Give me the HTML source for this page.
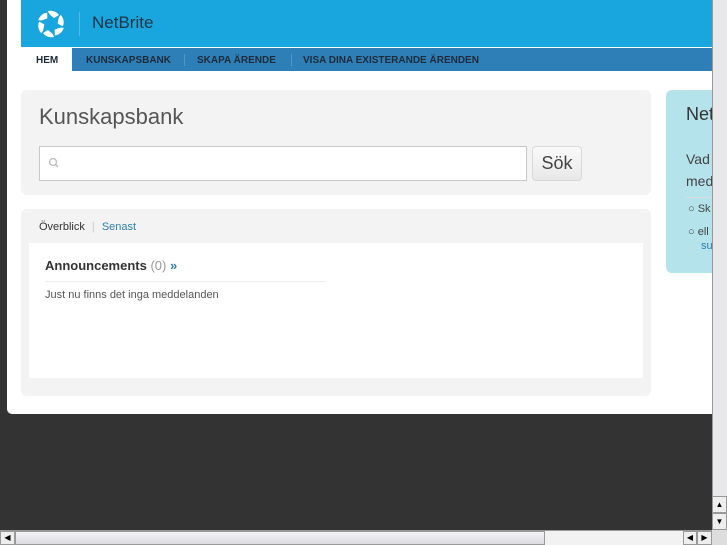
<!DOCTYPE html>
<html><head><meta charset="utf-8"><style>
*{margin:0;padding:0;box-sizing:border-box}
body{width:727px;height:545px;background:#333;position:relative;overflow:hidden;font-family:"Liberation Sans",sans-serif}
.a{position:absolute}
.page{left:7px;top:0;width:705px;height:414px;background:#fff;border-radius:0 0 0 5px}
.hdr{left:21px;top:0;width:691px;height:47px;background:#19a5de}
.nav{left:21px;top:48px;width:691px;height:23px;background:#2e7fb7}
.nav span{position:absolute;top:7px;font-size:10px;font-weight:bold;color:#1d2b3a}
.sep{position:absolute;top:6px;width:1px;height:12px;background:#5594c4}
.card{background:#f3f3f3;border-radius:6px}
</style></head><body>
<div class="a page"></div>
<div class="a hdr">
 <svg class="a" style="left:15px;top:9px" width="30" height="30" viewBox="0 0 30 30">
  <g fill="#fff" transform="translate(15 15)">
   <path id="p" d="M-3,-13 C2,-14 6,-12 8,-9 L3,-6 C1,-8 -2,-9 -3,-13Z"/>
   <use href="#p" transform="rotate(60)"/><use href="#p" transform="rotate(120)"/>
   <use href="#p" transform="rotate(180)"/><use href="#p" transform="rotate(240)"/><use href="#p" transform="rotate(300)"/>
  </g>
 </svg>
 <div class="a" style="left:58px;top:12px;width:1px;height:24px;background:#4dbbe6"></div>
 <div class="a" style="left:71px;top:13px;font-size:17px;color:#1c3545">NetBrite</div>
</div>
<div class="a nav">
 <div class="a" style="left:0;top:0;width:51px;height:23px;background:#fff"></div>
 <span style="left:15px">HEM</span>
 <span style="left:65px">KUNSKAPSBANK</span>
 <div class="sep" style="left:163px"></div>
 <span style="left:176px">SKAPA ÄRENDE</span>
 <div class="sep" style="left:270px"></div>
 <span style="left:282px">VISA DINA EXISTERANDE ÄRENDEN</span>
</div>
<div class="a card" style="left:21px;top:90px;width:630px;height:105px"></div>
<div class="a" style="left:39px;top:104px;font-size:22px;color:#555">Kunskapsbank</div>
<div class="a" style="left:39px;top:146px;width:488px;height:35px;background:#fff;border:1px solid #c8c8c8"></div>
<svg class="a" style="left:48px;top:157px" width="12" height="12"><circle cx="5" cy="5" r="3.5" fill="none" stroke="#bbb" stroke-width="1.3"/><path d="M7.5 7.5L10 10" stroke="#bbb" stroke-width="1.5"/></svg>
<div class="a" style="left:532px;top:146px;width:50px;height:35px;background:linear-gradient(#fafafa,#e8e8e8);border:1px solid #d8d8d8;border-radius:4px;font-size:18px;color:#444;text-align:center;line-height:33px">Sök</div>
<div class="a card" style="left:21px;top:209px;width:630px;height:187px"></div>
<div class="a" style="left:39px;top:221px;font-size:11px;color:#333">Överblick <span style="color:#ccc;margin:0 4px">|</span> <span style="color:#2d7fb0">Senast</span></div>
<div class="a" style="left:29px;top:243px;width:614px;height:135px;background:#fff"></div>
<div class="a" style="left:45px;top:258px;font-size:13px;font-weight:bold;color:#333">Announcements <span style="font-weight:normal;color:#999">(0)</span> <span style="color:#2d7fb0">»</span></div>
<div class="a" style="left:45px;top:281px;width:281px;height:1px;background:#eee"></div>
<div class="a" style="left:45px;top:289px;font-size:11px;color:#555">Just nu finns det inga meddelanden</div>
<div class="a" style="left:666px;top:90px;width:60px;height:183px;background:#b5e3ec;border-radius:6px;overflow:hidden">
 <div class="a" style="left:20px;top:14px;font-size:18px;color:#333;white-space:nowrap">NetBrite</div>
 <div class="a" style="left:20px;top:58px;font-size:14px;color:#444;line-height:22px;white-space:nowrap">Vad<br>meddelande</div>
 <div class="a" style="left:20px;top:107px;width:40px;height:1px;background:#ddd"></div>
 <div class="a" style="left:22px;top:108px;font-size:11px;color:#444;line-height:23px;white-space:nowrap">○ Sk<br>○ ell</div>
 <div class="a" style="left:35px;top:150px;font-size:11px;color:#2d7fb0">su</div>
</div>
<div class="a" style="left:712px;top:0;width:15px;height:530px;background:#e8e8ea;border-left:1px solid #999"></div>
<div class="a" style="left:712px;top:496px;width:15px;height:17px;background:#eee;border:1px solid #999;font-size:8px;text-align:center;line-height:15px">▲</div>
<div class="a" style="left:712px;top:513px;width:15px;height:17px;background:#eee;border:1px solid #999;font-size:8px;text-align:center;line-height:15px">▼</div>
<div class="a" style="left:0;top:530px;width:712px;height:15px;background:#f2f2f2;border-top:1px solid #999"></div>
<div class="a" style="left:0;top:531px;width:15px;height:14px;background:#eee;border:1px solid #999;font-size:8px;text-align:center;line-height:12px">◀</div>
<div class="a" style="left:15px;top:531px;width:530px;height:14px;background:linear-gradient(#f4f4f6,#dcdce0);border:1px solid #999"></div>
<div class="a" style="left:683px;top:531px;width:14px;height:14px;background:#eee;border:1px solid #999;font-size:8px;text-align:center;line-height:12px">◀</div>
<div class="a" style="left:697px;top:531px;width:15px;height:14px;background:#eee;border:1px solid #999;font-size:8px;text-align:center;line-height:12px">▶</div>
<div class="a" style="left:712px;top:530px;width:15px;height:15px;background:#ddd"></div>
</body></html>
